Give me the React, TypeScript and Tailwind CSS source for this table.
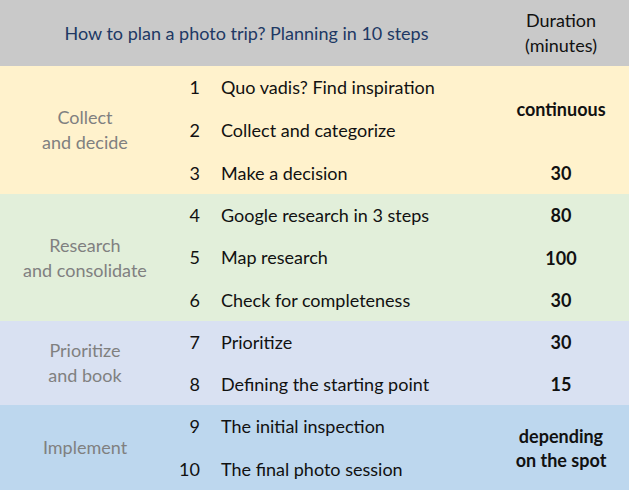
import React from 'react'

type Step = { n: number; title: string }

type Section = {
  label: string[]
  bg: string
  rows: string
  steps: Step[]
  // duration cells: text lines + how many rows they span
  durations: { lines: string[]; span: number }[]
}

const sections: Section[] = [
  {
    label: ['Collect', 'and decide'],
    bg: 'bg-[#fff2cc]',
    rows: 'grid-rows-[43px_43px_42px]',
    steps: [
      { n: 1, title: 'Quo vadis? Find inspiration' },
      { n: 2, title: 'Collect and categorize' },
      { n: 3, title: 'Make a decision' },
    ],
    durations: [
      { lines: ['continuous'], span: 2 },
      { lines: ['30'], span: 1 },
    ],
  },
  {
    label: ['Research', 'and consolidate'],
    bg: 'bg-[#e2efda]',
    rows: 'grid-rows-[42px_43px_42px]',
    steps: [
      { n: 4, title: 'Google research in 3 steps' },
      { n: 5, title: 'Map research' },
      { n: 6, title: 'Check for completeness' },
    ],
    durations: [
      { lines: ['80'], span: 1 },
      { lines: ['100'], span: 1 },
      { lines: ['30'], span: 1 },
    ],
  },
  {
    label: ['Prioritize', 'and book'],
    bg: 'bg-[#d9e1f2]',
    rows: 'grid-rows-[42px_42px]',
    steps: [
      { n: 7, title: 'Prioritize' },
      { n: 8, title: 'Defining the starting point' },
    ],
    durations: [
      { lines: ['30'], span: 1 },
      { lines: ['15'], span: 1 },
    ],
  },
  {
    label: ['Implement'],
    bg: 'bg-[#bdd7ee]',
    rows: 'grid-rows-[43px_42px]',
    steps: [
      { n: 9, title: 'The initial inspection' },
      { n: 10, title: 'The final photo session' },
    ],
    durations: [{ lines: ['depending', 'on the spot'], span: 2 }],
  },
]

const spanRow: Record<number, string> = {
  1: 'row-span-1',
  2: 'row-span-2',
  3: 'row-span-3',
}

function SectionBlock({ section }: { section: Section }) {
  const count = section.steps.length
  let rowStart = 1

  return (
    <div className={`grid grid-cols-[170px_30px_1fr_136px] ${section.rows} ${section.bg}`}>
      {/* category label spans the whole section */}
      <div
        className={`col-start-1 row-start-1 ${spanRow[count]} flex flex-col items-center justify-center text-center text-[18px] leading-[25px] text-[#808080]`}
      >
        {section.label.map((l) => (
          <span key={l}>{l}</span>
        ))}
      </div>

      {section.steps.map((s, i) => (
        <React.Fragment key={s.n}>
          <div
            className="col-start-2 flex items-center justify-end text-[18px] text-[#111]"
            style={{ gridRowStart: i + 1 }}
          >
            {s.n}
          </div>
          <div
            className="col-start-3 flex items-center pl-[21px] text-[18px] text-[#111]"
            style={{ gridRowStart: i + 1 }}
          >
            {s.title}
          </div>
        </React.Fragment>
      ))}

      {section.durations.map((d, i) => {
        const start = rowStart
        rowStart += d.span
        return (
          <div
            key={i}
            className={`col-start-4 ${spanRow[d.span]} flex flex-col items-center justify-center text-center text-[18px] font-bold leading-[24px] text-[#111]`}
            style={{ gridRowStart: start }}
          >
            {d.lines.map((l) => (
              <span key={l}>{l}</span>
            ))}
          </div>
        )
      })}
    </div>
  )
}

export default function App() {
  return (
    <div className="w-[629px] h-[490px] overflow-hidden font-['Lato',sans-serif]">
      {/* Header */}
      <div className="flex h-[66px] bg-[#c9c9c9]">
        <div className="flex flex-1 items-center justify-center text-[18px] text-[#203864]">
          How to plan a photo trip? Planning in 10 steps
        </div>
        <div className="flex w-[136px] flex-col items-center justify-center text-[18px] leading-[25px] text-[#111]">
          <span>Duration</span>
          <span>(minutes)</span>
        </div>
      </div>

      {sections.map((s) => (
        <SectionBlock key={s.label[0]} section={s} />
      ))}
    </div>
  )
}
